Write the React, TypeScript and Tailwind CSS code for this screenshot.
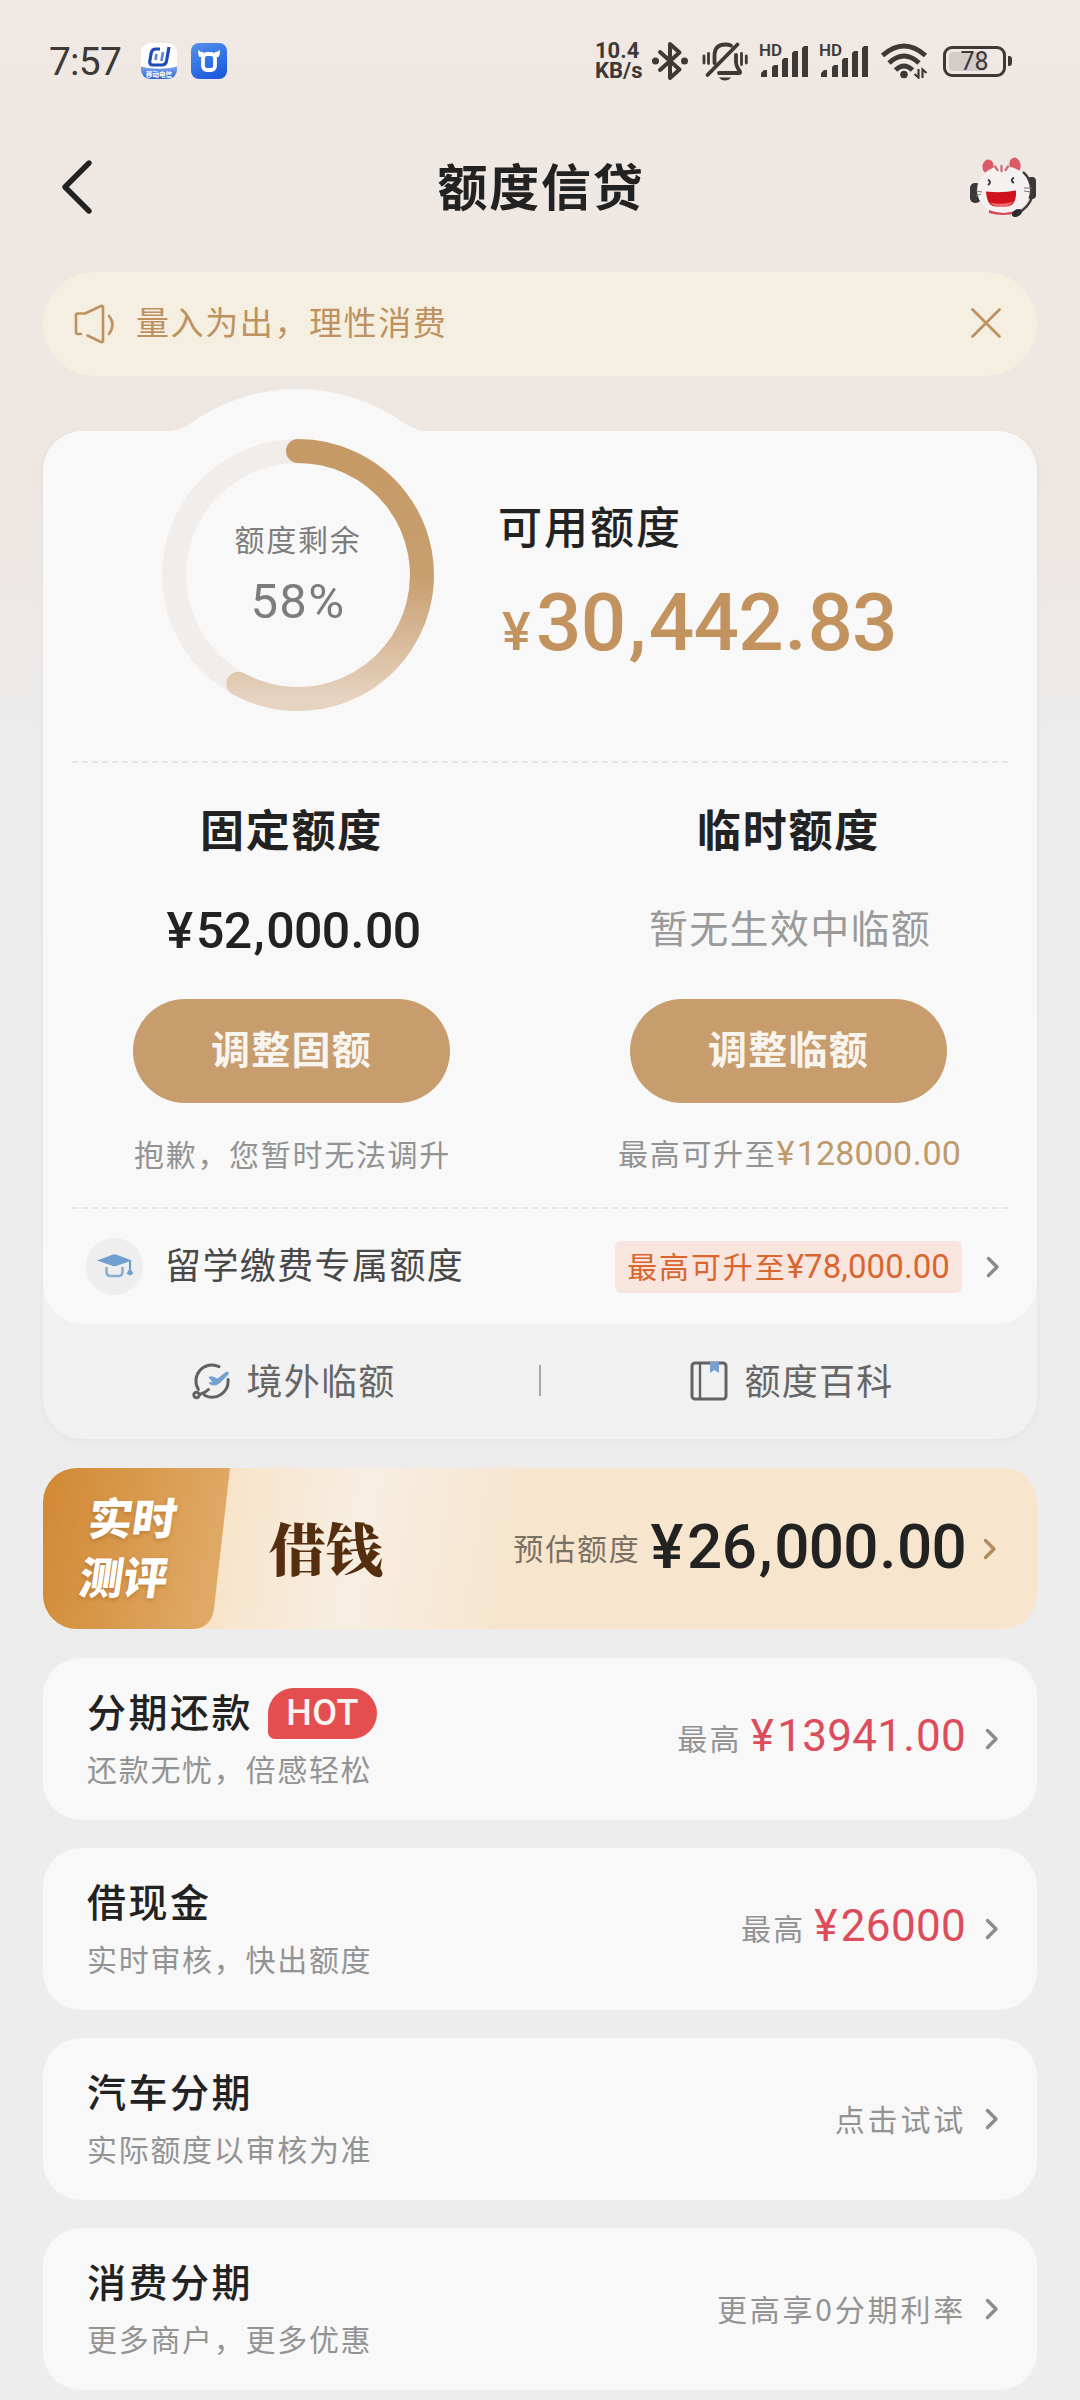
import type { ReactNode } from "react";

const cjk = "font-['Noto_Sans_CJK_SC',sans-serif]";
const num = "font-[Roboto,'Noto_Sans_CJK_SC',sans-serif]";

const products = [
  { title: "分期还款", sub: "还款无忧，倍感轻松", amount: "¥13941.00", hot: true },
  { title: "借现金", sub: "实时审核，快出额度", amount: "¥26000" },
  { title: "汽车分期", sub: "实际额度以审核为准", note: "点击试试" },
  { title: "消费分期", sub: "更多商户，更多优惠", note: "更高享0分期利率" },
];

// amounts get a little air around the separators
function Money({ value, className = "" }: { value: string; className?: string }) {
  return (
    <span className={`${num} whitespace-nowrap ${className}`}>
      {value.split(/([¥,.])/).map((part, i) => {
        if (part === "¥") return <span key={i} className="mr-[0.07em]">{part}</span>;
        if (part === ",") return <span key={i} className="mx-[0.04em]">{part}</span>;
        if (part === ".") return <span key={i} className="mx-[0.02em]">{part}</span>;
        return part;
      })}
    </span>
  );
}

function Chevron({ className = "text-[#8b8b8b]" }: { className?: string }) {
  return (
    <svg viewBox="0 0 14 22" className={`w-[14px] h-[22px] shrink-0 ${className}`} fill="none" stroke="currentColor" strokeWidth="3.4" strokeLinecap="round" strokeLinejoin="round">
      <path d="M2.5 2.5 11 11l-8.500 8.500" />
    </svg>
  );
}

function Signal() {
  return (
    <svg viewBox="0 0 50 38" className="w-[50px] h-[38px] -mt-[4px] overflow-visible" fill="#3d3937">
      <text x="0" y="16" fontSize="16.500" fontWeight="600" fontFamily="Roboto" textLength="23" lengthAdjust="spacingAndGlyphs">HD</text>
      <path d="M2 37v-4l3-3h3v7zM13 37V27l2-2h4v12zM23 37V20l2-2h4v19zM33 37V13l2-2h4v26zM43 37V8l2-2h4v31z" />
    </svg>
  );
}

function StatusBar() {
  return (
    <div className="flex items-center h-[122px] pl-[49px] pr-[68px] text-[#3d3937]">
      <span className={`${num} mt-[1px] text-[39px] leading-[40px] w-[92px] tracking-[-0.8px]`}>7:57</span>
      <svg viewBox="0 0 36 36" className="w-[36px] h-[36px] mr-[14px]">
        <defs>
          <linearGradient id="blueA" x1="0" y1="0" x2="0" y2="1">
            <stop offset="0" stopColor="#7ea6ee" />
            <stop offset="1" stopColor="#2f63cf" />
          </linearGradient>
          <linearGradient id="blueB" x1="0" y1="0" x2="0.500" y2="1">
            <stop offset="0" stopColor="#5592ea" />
            <stop offset="1" stopColor="#1f5de0" />
          </linearGradient>
          <clipPath id="appClip">
            <rect width="36" height="36" rx="9" />
          </clipPath>
        </defs>
        <g clipPath="url(#appClip)">
          <rect width="36" height="36" fill="#fff" />
          <path d="M0 23.500c11 3 25 3 36 0V36H0z" fill="url(#blueA)" />
          <path d="M19 6h-4q-4 0-4.800 4L8.800 18q-.6 4 3 4h9q4 0 4.700-4L28 4" fill="none" stroke="#1c4cb4" strokeWidth="3.200" />
          <path d="M15.500 11 14.500 17M22 9l-1.600 9" fill="none" stroke="#5b83d4" strokeWidth="2.600" />
          <text x="18" y="33.500" fontSize="6.500" fill="#fff" textAnchor="middle" fontFamily="Noto Sans CJK SC" fontWeight="700">移动电信</text>
        </g>
      </svg>
      <svg viewBox="0 0 36 36" className="w-[36px] h-[36px]">
        <rect width="36" height="36" rx="8" fill="url(#blueB)" />
        <rect x="12" y="11" width="12" height="16" rx="4" fill="none" stroke="#fff" strokeWidth="3.800" />
        <path d="M7.500 6.500q1 3 5 2.500l-1 5h-3Q6.500 11 7.500 6.500zM28.500 6.500q-1 3-5 2.500l1 5h3q2-3 1-7.500z" fill="#fff" />
      </svg>

      <div className="ml-auto flex items-center">
        <div className={`${num} w-[57px] text-[22px] font-bold leading-[20px]`}>
          <div>10.4</div>
          <div>KB/s</div>
        </div>
        <svg viewBox="0 0 36 40" className="w-[36px] h-[40px] mr-[14px]" fill="none" stroke="#3d3937" strokeWidth="4" strokeLinejoin="round" strokeLinecap="round">
          <path d="M8 11l19.500 17.500L18 37V3l9.500 8.500L8 29" />
          <circle cx="3.500" cy="20" r="1.500" fill="#3d3937" />
          <circle cx="32.500" cy="20" r="1.500" fill="#3d3937" />
        </svg>
        <svg viewBox="0 0 46 40" className="w-[46px] h-[40px] mr-[11px]" fill="none" stroke="#3d3937" strokeWidth="3.800" strokeLinecap="round">
          <path d="M5.500 34 35.500 3.500" />
          <path d="M12.500 22V15q0-11.500 11-11.500 3.500 0 5.500 1.200" />
          <path d="M34 14v7q0 4 4 9.500.5 1.500-1 1.500H17" />
          <path d="M17 36.500h12q-2 3-6 3t-6-3z" fill="#3d3937" stroke="none" />
          <path d="M2 15v7M6.500 12.500v10M39.500 12.500v11M44.300 15v7" strokeWidth="2.800" />
        </svg>
        <Signal />
        <span className="w-[10px]" />
        <Signal />
        <svg viewBox="0 0 48 36" className="w-[48px] h-[36px] ml-[12px] mr-[14px]" fill="none" stroke="#3d3937" strokeWidth="4.800">
          <path d="M1.500 12.500q21.500-19 43 0" />
          <path d="M8 20q15-14 30 0" />
          <path d="M14.500 27q8.500-8 17 0" />
          <circle cx="23" cy="31.500" r="3.800" fill="#3d3937" stroke="none" />
          <path d="M37.500 26v8.500l-4-3.500M41.500 35v-8.500l4 3.500" strokeWidth="2.200" />
        </svg>
        <div className="flex items-center">
          <div className={`${num} relative flex items-center justify-center w-[63px] h-[31px] rounded-[9px] border-[3px] border-[#3d3937] text-[25px] leading-none`}>
            <span className="absolute left-[3px] top-[3px] bottom-[3px] w-[36px] rounded-l-[4px] bg-[#d3ccc8]" />
            <span className="relative">78</span>
          </div>
          <span className="ml-[2px] w-[4px] h-[10px] rounded-r-[3px] bg-[#3d3937]" />
        </div>
      </div>
    </div>
  );
}

function Mascot() {
  return (
    <svg viewBox="0 0 66 60" className="w-[66px] h-[60px]">
      <ellipse cx="18" cy="9.500" rx="5.500" ry="7" fill="#dc5a66" transform="rotate(12 18 9.500)" />
      <ellipse cx="45" cy="8" rx="5.500" ry="7.500" fill="#dc5a66" transform="rotate(-12 45 8)" />
      <rect x="0" y="26" width="11" height="20" rx="5" fill="#3a3838" />
      <path d="M53 15q9 8 9 20" fill="none" stroke="#3a3838" strokeWidth="2.500" />
      <rect x="57" y="20" width="9" height="22" rx="4" fill="#3a3838" />
      <ellipse cx="33.500" cy="33" rx="26.500" ry="24" fill="#f6f1f1" />
      <path d="M19 53q15 6 28 0v3q-14 4-28 0z" fill="#d44552" />
      <path d="M25 9.500l2.500 3.500M31.500 9v5M38 9.500l-2.500 3.500" stroke="#cf6f78" strokeWidth="2.400" strokeLinecap="round" />
      <path d="M18 22.500q4 2.500 0 5.500M44 20.500q-4.500 2.500 0 5.500" fill="none" stroke="#39363a" strokeWidth="2" />
      <path d="M16 34.500q15 2 30-1v5q-1 11-10 11H26q-9 0-10-15z" fill="#cf121c" />
      <path d="M20 45.500q13 3 23-1-3 5-8 5h-6q-5 0-9-4z" fill="#f06a70" />
      <path d="M6 34l6 1M6 39l5-2M54 31l8 0M54 34l7 1" stroke="#777" strokeWidth="1" />
      <path d="M62 40q-3 10-14 16" fill="none" stroke="#3a3838" strokeWidth="2.500" />
      <ellipse cx="47" cy="56" rx="5.500" ry="3.500" fill="#2e2c2c" transform="rotate(-30 47 56)" />
    </svg>
  );
}

function QuotaColumn({ title, children, action, caption }: { title: string; children: ReactNode; action: string; caption: ReactNode }) {
  return (
    <div className="flex flex-1 flex-col items-center">
      <h3 className="mt-[35px] h-[60px] leading-[60px] text-[44px] tracking-[1.8px] font-bold text-[#222]">{title}</h3>
      <div className="mt-[42px] h-[60px] flex items-center">{children}</div>
      <button className="mt-[39px] w-[317px] h-[104px] rounded-full bg-[#c79d6e] pb-[7px] text-[39px] tracking-[1.2px] font-bold text-[#f8f4ee]">{action}</button>
      <div className="mt-[25px] h-[52px] flex items-center pl-[2px] text-[30px] tracking-[1.7px] text-[#939393]">{caption}</div>
    </div>
  );
}

function QuotaCard() {
  return (
    <section className="relative mt-[55px] rounded-[40px] bg-[#f1f1f1] shadow-[0_3px_8px_rgba(0,0,0,0.035)]">
      {/* bump of the card behind the ring */}
      <svg viewBox="0 0 300 44" className="absolute left-[105px] top-[-42px] w-[300px] h-[44px]">
        <path d="M20 44v-2q9 0 19-5.500a186 186 0 0 1 221 0q10 5.500 19 5.500v2z" fill="#f8f8f8" />
      </svg>
      <div className="relative rounded-[40px] bg-[#f8f8f8] px-[29px] h-[893px]">
        <div className="flex h-[330px]">
          <div className="relative mt-[7px] ml-[89px] w-[274px] h-[274px] shrink-0">
            <svg viewBox="0 0 274 274" className="w-full h-full" fill="none" strokeWidth="24">
              <defs>
                <linearGradient id="ring" x1="0" y1="0" x2="0" y2="1">
                  <stop offset="0" stopColor="#c69a66" />
                  <stop offset="0.500" stopColor="#c79e6e" />
                  <stop offset="1" stopColor="#e6d3c0" />
                </linearGradient>
              </defs>
              <circle cx="137" cy="137" r="124" stroke="#f1edea" />
              <path d="M137 13a124 124 0 1 1-59.700 232.700" stroke="url(#ring)" strokeLinecap="round" />
            </svg>
            <div className="absolute inset-0 flex flex-col items-center text-[#7d7d7d]">
              <span className="mt-[78px] text-[30px] leading-[44px] tracking-[1.7px]">额度剩余</span>
              <span className={`${num} mt-[14px] text-[49px] leading-[56px] tracking-[1.4px]`}>58%</span>
            </div>
          </div>
          <div className="ml-[63px]">
            <h2 className="mt-[64px] text-[44px] leading-[60px] tracking-[2px] font-medium text-[#222]">可用额度</h2>
            <div className={`${num} mt-[23px] flex items-baseline leading-[90px] font-medium text-[#c2935f]`}>
              <span className="w-[38px] pl-[4px] text-[54px]">¥</span>
              <Money value="30,442.83" className="text-[80px] tracking-[-0.8px]" />
            </div>
          </div>
        </div>

        <div className="border-t-2 border-dashed border-[#e6e6e6]" />
        <div className="flex -mx-[29px] h-[444px]">
          <QuotaColumn title="固定额度" action="调整固额" caption={<span className="-mt-[1px]">抱歉，您暂时无法调升</span>}>
            <Money value="¥52,000.00" className="mt-[3px] pl-[4px] text-[50px] tracking-[-0.6px] font-medium text-[#222]" />
          </QuotaColumn>
          <QuotaColumn
            title="临时额度"
            action="调整临额"
            caption={
              <span className="-mt-[1px]">
                最高可升至
                <Money value="¥128000.00" className="text-[34px] tracking-[0.1px] text-[#bf9a6b]" />
              </span>
            }
          >
            <span className="-mt-[8px] pl-[3px] text-[39px] tracking-[1.3px] text-[#9a9a9a]">暂无生效中临额</span>
          </QuotaColumn>
        </div>
        <div className="border-t-2 border-dashed border-[#e6e6e6]" />

        <div className="flex items-center h-[115px] pl-[14px] pr-[8px]">
          <span className="flex items-center justify-center w-[57px] h-[57px] rounded-full bg-[#eeeeef]">
            <svg viewBox="0 0 36 25" className="w-[36px] h-[25px]" fill="#6f9fd0">
              <path d="M0 6.500 16 .5q1.500-.5 3 0l16 6-16 5.500q-1.500.5-3 0z" />
              <path d="M9.500 13v5q0 4 4 4h8q4 0 4-4v-5" fill="none" stroke="#8caed4" strokeWidth="2.600" />
              <path d="M33 6.500v12" stroke="#6f9fd0" strokeWidth="2.200" />
              <path d="M33 14.500l3.500 5-3.500 2-3.500-2z" />
            </svg>
          </span>
          <span className="ml-[22px] -mt-[7px] text-[36px] tracking-[1.4px] text-[#484848]">留学缴费专属额度</span>
          <span className="ml-auto mr-[24px] flex items-center h-[52px] px-[12px] rounded-[6px] bg-[#f8e5de] text-[#d9662f]">
            <span className="-mt-[3px] text-[30px] tracking-[1.9px]">最高可升至</span>
            <span className={`${num} text-[33px] tracking-[0.1px]`}>¥78,000.00</span>
          </span>
          <Chevron />
        </div>
      </div>

      <div className="flex items-center h-[115px] pb-[2px] text-[36px] tracking-[1.2px] text-[#666]">
        <div className="flex flex-1 items-center justify-center pl-[5px]">
          <svg viewBox="0 0 38 38" className="w-[38px] h-[38px] mr-[17px]" fill="none" stroke="#626262" strokeWidth="3" strokeLinecap="round">
            <path d="M27 4.600A16 16 0 0 0 6.400 27.500" />
            <path d="M36 17.500A16 16 0 0 1 12.500 33.200" />
            <path d="M16.500 27.500q-3.500 3.500-9 5" />
            <circle cx="4.500" cy="33" r="2.700" />
            <path d="M16.500 20.500l4-.5-4-4.500 2.500-1.500 6.500 2.500 7.500-6q2.500-1.500 3.500-.5t-.5 3L28 21q-3 2.500-6 2.500-4 0-5.500-3z" fill="#76a1cf" stroke="none" />
          </svg>
          <span className="-mt-[3px]">境外临额</span>
        </div>
        <span className="w-[2px] h-[31px] bg-[#a8a8a8]" />
        <div className="flex flex-1 items-center justify-center pl-[5px]">
          <svg viewBox="0 0 38 40" className="w-[38px] h-[40px] mr-[17px]" fill="none" stroke="#626262" strokeWidth="3">
            <rect x="2" y="2" width="34" height="36" rx="3" />
            <path d="M10 2v36" strokeWidth="2.400" />
            <path d="M20 1h9v11l-4.500-3-4.500 3z" fill="#76a1cf" stroke="none" />
          </svg>
          <span className="-mt-[3px]">额度百科</span>
        </div>
      </div>
    </section>
  );
}

function LoanBanner() {
  return (
    <section className="relative flex items-center mt-[29px] mb-[29px] h-[161px] rounded-[34px] overflow-hidden pr-[40px] bg-[linear-gradient(100deg,#f8e3c8_18%,#f7eee2_32%,#f7e5cd_48%,#f7e5cd_100%)]">
      <svg viewBox="0 0 187 161" className="absolute left-0 top-0 w-[187px] h-[161px]">
        <defs>
          <linearGradient id="tag" x1="0" y1="0.300" x2="1" y2="0.500">
            <stop offset="0" stopColor="#d28a36" />
            <stop offset="1" stopColor="#e0ab68" />
          </linearGradient>
        </defs>
        <path d="M0 0h187l-16 141q-3 20-22 20H0z" fill="url(#tag)" />
      </svg>
      <div className="relative -mt-[5px] w-[187px] shrink-0 pl-[40px] text-[44px] leading-[59px] font-black text-white [text-shadow:0_2px_4px_rgba(140,80,20,0.4)]">
        <div className="-skew-x-8 origin-left pl-[6px]">实时</div>
        <div className="-skew-x-8 origin-left -ml-[3px]">测评</div>
      </div>
      <div className="ml-[39px] -mt-[3px] text-[57px] font-black text-[#552e10] font-['Noto_Serif_CJK_SC','Noto_Sans_CJK_SC',serif]">借钱</div>
      <div className="ml-auto flex items-center">
        <span className="-mt-[3px] text-[30px] tracking-[1.8px] text-[#7b7064]">预估额度</span>
        <Money value="¥26,000.00" className="ml-[10px] mr-[17px] -mt-[4px] text-[62px] tracking-[-0.7px] font-medium text-[#222]" />
        <Chevron className="text-[#b18c5f]" />
      </div>
    </section>
  );
}

export default function App() {
  return (
    <div className={`${cjk} w-[1080px] h-[2400px] overflow-hidden bg-[linear-gradient(180deg,#efe8e3_0px,#eee6e1_480px,#ececec_740px,#ededed_100%)]`}>
      <StatusBar />
      <header className="grid grid-cols-[1fr_auto_1fr] items-center h-[150px] pb-[20px] pl-[60px] pr-[44px]">
        <svg viewBox="0 0 34 56" className="w-[34px] h-[56px]" fill="none" stroke="#222" strokeWidth="5.400" strokeLinecap="round" strokeLinejoin="round">
          <path d="M29 4 5 28l24 24" />
        </svg>
        <h1 className="-mt-[6px] -ml-[14px] text-[50px] tracking-[1.8px] font-bold text-[#222]">额度信贷</h1>
        <div className="flex justify-end">
          <Mascot />
        </div>
      </header>

      <main className="px-[43px]">
        <div className="flex items-center h-[104px] rounded-full bg-[#f5efe1] pl-[31px] pr-[35px] text-[#bd9160]">
          <svg viewBox="0 0 42 40" className="w-[42px] h-[40px] mr-[20px]" fill="none" stroke="currentColor" strokeWidth="2.600" strokeLinecap="round" strokeLinejoin="round">
            <path d="M7 30H3.500q-1.500 0-1.500-1.500V11q0-1.500 1.500-1.500H11L27 2q2-.5 2 1.500v33q0 2-2 1.500L13.500 31.500" />
            <path d="M35 12q7 8 0 18" />
          </svg>
          <span className="-mt-[4px] text-[33px] tracking-[1.6px]">量入为出，理性消费</span>
          <svg viewBox="0 0 32 32" className="ml-auto -mt-[2px] w-[32px] h-[32px]" fill="none" stroke="currentColor" strokeWidth="2.800" strokeLinecap="round">
            <path d="M2.500 2.500l27 27M29.500 2.500l-27 27" />
          </svg>
        </div>

        <QuotaCard />
        <LoanBanner />

        <div className="flex flex-col gap-[28px]">
          {products.map((p) => (
            <section key={p.title} className="flex items-center justify-between h-[162px] rounded-[38px] bg-[#f8f8f8] pl-[44px] pr-[38px]">
              <div>
                <div className="flex items-center h-[54px]">
                  <h3 className="-mt-[5px] text-[39px] tracking-[2.5px] font-medium text-[#222]">{p.title}</h3>
                  {p.hot && (
                    <span className={`${num} ml-[15px] flex items-center justify-center w-[109px] h-[51px] rounded-[26px] rounded-bl-[7px] bg-[#e54e4f] text-[36px] tracking-[0.4px] font-medium text-[#faf4f2]`}>HOT</span>
                  )}
                </div>
                <p className="mt-[4px] text-[30px] leading-[48px] tracking-[1.7px] text-[#939393]">{p.sub}</p>
              </div>
              <div className="-mt-[1px] flex items-center text-[30px] text-[#939393]">
                {p.amount ? (
                  <span className="-mt-[6px] flex items-baseline">
                    <span className="-translate-y-[1px] tracking-[2.2px]">最高</span>
                    <Money value={p.amount} className="ml-[9px] text-[44px] tracking-[0.3px] text-[#dc4c5b]" />
                  </span>
                ) : (
                  <span className="-mt-[1px] tracking-[2.8px]">{p.note}</span>
                )}
                <span className="w-[19px]" />
                <Chevron />
              </div>
            </section>
          ))}
        </div>
      </main>
    </div>
  );
}
